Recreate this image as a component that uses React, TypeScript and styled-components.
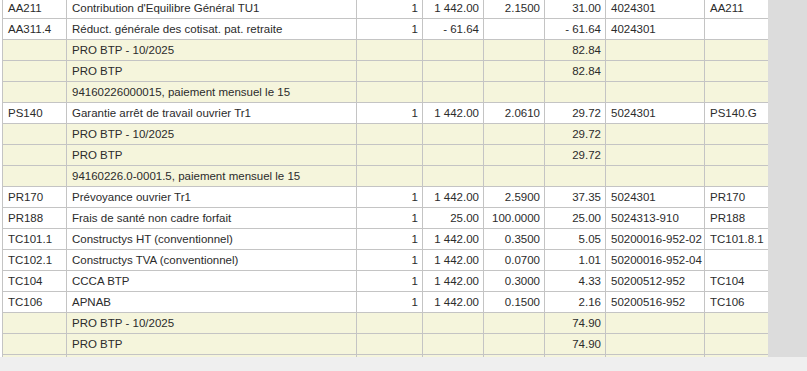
import * as React from "react";
import styled, { createGlobalStyle } from "styled-components";

const { useRef, useEffect } = React;

const GlobalStyle = createGlobalStyle`
  html, body {
    margin: 0;
    padding: 0;
    background: #efefef;
    font-family: "Liberation Sans", Arial, sans-serif;
  }
`;

const Page = styled.div`
  display: flex;
  flex-direction: column;
  width: 807px;
  height: 371px;
  overflow: hidden;
`;

const Main = styled.div`
  display: flex;
  height: 357px;
  background: #dcdcdc;
`;

const Viewport = styled.div`
  width: 768px;
  height: 357px;
  overflow: hidden;
  background: #ffffff;
  padding-left: 2px;
  box-sizing: border-box;
`;

const Footer = styled.div`
  height: 14px;
  background: #efefef;
`;

const Grid = styled.table`
  border-collapse: collapse;
  table-layout: fixed;
  width: 766px;
  font-size: 11.5px;
  color: #2b2b2b;
`;

const Row = styled.tr<{ $sub?: boolean }>`
  background: ${(p) => (p.$sub ? "#f5f5dc" : "#ffffff")};
`;

const Cell = styled.td<{ $num?: boolean }>`
  height: 20px;
  line-height: 20px;
  padding: 0 4px 0 5px;
  border: 1px solid #c4c4c4;
  white-space: nowrap;
  overflow: hidden;
  text-align: ${(p) => (p.$num ? "right" : "left")};
`;

type Line = {
  code?: string;
  label?: string;
  base?: string;
  amount?: string;
  rate?: string;
  total?: string;
  account?: string;
  ref?: string;
  sub?: boolean;
};

const lines: Line[] = [
  { code: "AA211", label: "Contribution d'Equilibre Général TU1", base: "1", amount: "1 442.00", rate: "2.1500", total: "31.00", account: "4024301", ref: "AA211" },
  { code: "AA311.4", label: "Réduct. générale des cotisat. pat. retraite", base: "1", amount: "- 61.64", total: "- 61.64", account: "4024301" },
  { label: "PRO BTP - 10/2025", total: "82.84", sub: true },
  { label: "PRO BTP", total: "82.84", sub: true },
  { label: "94160226000015, paiement mensuel le 15", sub: true },
  { code: "PS140", label: "Garantie arrêt de travail ouvrier Tr1", base: "1", amount: "1 442.00", rate: "2.0610", total: "29.72", account: "5024301", ref: "PS140.G" },
  { label: "PRO BTP - 10/2025", total: "29.72", sub: true },
  { label: "PRO BTP", total: "29.72", sub: true },
  { label: "94160226.0-0001.5, paiement mensuel le 15", sub: true },
  { code: "PR170", label: "Prévoyance ouvrier Tr1", base: "1", amount: "1 442.00", rate: "2.5900", total: "37.35", account: "5024301", ref: "PR170" },
  { code: "PR188", label: "Frais de santé non cadre forfait", base: "1", amount: "25.00", rate: "100.0000", total: "25.00", account: "5024313-910", ref: "PR188" },
  { code: "TC101.1", label: "Constructys HT (conventionnel)", base: "1", amount: "1 442.00", rate: "0.3500", total: "5.05", account: "50200016-952-02", ref: "TC101.8.1" },
  { code: "TC102.1", label: "Constructys TVA (conventionnel)", base: "1", amount: "1 442.00", rate: "0.0700", total: "1.01", account: "50200016-952-04" },
  { code: "TC104", label: "CCCA BTP", base: "1", amount: "1 442.00", rate: "0.3000", total: "4.33", account: "50200512-952", ref: "TC104" },
  { code: "TC106", label: "APNAB", base: "1", amount: "1 442.00", rate: "0.1500", total: "2.16", account: "50200516-952", ref: "TC106" },
  { label: "PRO BTP - 10/2025", total: "74.90", sub: true },
  { label: "PRO BTP", total: "74.90", sub: true },
  { sub: true },
];

const widths = [64, 290, 66, 61, 61, 61, 99, 64];

export default function App() {
  const viewport = useRef<HTMLDivElement>(null);

  useEffect(() => {
    if (viewport.current) viewport.current.scrollTop = 3;
  }, []);

  return (
    <Page>
      <GlobalStyle />
      <Main>
        <Viewport ref={viewport}>
          <Grid>
            <colgroup>
              {widths.map((w, i) => (
                <col key={i} style={{ width: w }} />
              ))}
            </colgroup>
            <tbody>
              {lines.map((l, i) => (
                <Row key={i} $sub={l.sub}>
                  <Cell>{l.code}</Cell>
                  <Cell>{l.label}</Cell>
                  <Cell $num>{l.base}</Cell>
                  <Cell $num>{l.amount}</Cell>
                  <Cell $num>{l.rate}</Cell>
                  <Cell $num>{l.total}</Cell>
                  <Cell>{l.account}</Cell>
                  <Cell>{l.ref}</Cell>
                </Row>
              ))}
            </tbody>
          </Grid>
        </Viewport>
      </Main>
      <Footer />
    </Page>
  );
}
